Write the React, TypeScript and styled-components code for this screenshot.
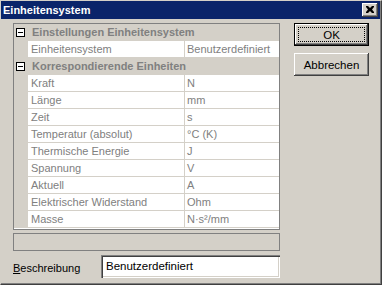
import * as React from "react";
import styled, { createGlobalStyle } from "styled-components";

const GlobalStyle = createGlobalStyle`
  html, body {
    margin: 0;
    padding: 0;
    background: #d4d0c8;
  }
  * {
    box-sizing: border-box;
  }
`;

type Row =
  | { kind: "category"; label: string }
  | { kind: "prop"; label: string; value: string };

const rows: Row[] = [
  { kind: "category", label: "Einstellungen Einheitensystem" },
  { kind: "prop", label: "Einheitensystem", value: "Benutzerdefiniert" },
  { kind: "category", label: "Korrespondierende Einheiten" },
  { kind: "prop", label: "Kraft", value: "N" },
  { kind: "prop", label: "Länge", value: "mm" },
  { kind: "prop", label: "Zeit", value: "s" },
  { kind: "prop", label: "Temperatur (absolut)", value: "°C (K)" },
  { kind: "prop", label: "Thermische Energie", value: "J" },
  { kind: "prop", label: "Spannung", value: "V" },
  { kind: "prop", label: "Aktuell", value: "A" },
  { kind: "prop", label: "Elektrischer Widerstand", value: "Ohm" },
  { kind: "prop", label: "Masse", value: "N·s²/mm" },
];

export default function App() {
  return (
    <>
      <GlobalStyle />
      <Window>
        <TitleBar>
          <span>Einheitensystem</span>
          <CloseButton aria-label="Schließen">
            <svg width="8" height="7" viewBox="0 0 8 7">
              <path
                d="M0 0h2l2 2 2-2h2v1L6 3.5 8 6v1H6L4 5 2 7H0V6l2-2.5L0 1z"
                fill="#000"
              />
            </svg>
          </CloseButton>
        </TitleBar>
        <Body>
          <Main>
            <Grid>
              {rows.map((row, i) =>
                row.kind === "category" ? (
                  <CategoryRow key={i}>
                    <Gutter>
                      <Minus />
                    </Gutter>
                    <CategoryLabel>{row.label}</CategoryLabel>
                  </CategoryRow>
                ) : (
                  <PropRow key={i}>
                    <Gutter />
                    <NameCell>{row.label}</NameCell>
                    <ValueCell>{row.value}</ValueCell>
                  </PropRow>
                )
              )}
            </Grid>
            <StatusBox />
            <DescRow>
              <DescLabel>
                <u>B</u>eschreibung
              </DescLabel>
              <DescInput>Benutzerdefiniert</DescInput>
            </DescRow>
          </Main>
          <Buttons>
            <Button $default>OK</Button>
            <Button>Abbrechen</Button>
          </Buttons>
        </Body>
      </Window>
    </>
  );
}

const Window = styled.div`
  width: 382px;
  height: 285px;
  background: #d4d0c8;
  border-top: 1px solid #d4d0c8;
  border-left: 1px solid #d4d0c8;
  border-right: 1px solid #404040;
  border-bottom: 1px solid #404040;
  box-shadow: inset -1px -1px #808080;
  font-family: "Liberation Sans", Arial, sans-serif;
  font-size: 11px;
  display: flex;
  flex-direction: column;
`;

const TitleBar = styled.div`
  height: 18px;
  margin-right: 1px;
  background: #0a246a;
  color: #fff;
  font-weight: bold;
  font-size: 11px;
  display: flex;
  align-items: center;
  justify-content: space-between;
  padding: 0 2px 0 2px;
`;

const CloseButton = styled.div`
  width: 16px;
  height: 14px;
  background: #d4d0c8;
  display: flex;
  align-items: center;
  justify-content: center;
  box-shadow: inset -1px -1px #404040, inset 1px 1px #fff,
    inset -2px -2px #808080;
  padding-bottom: 1px;
`;

const Body = styled.div`
  display: flex;
  gap: 14px;
  padding: 4px 0 0 12px;
`;

const Main = styled.div`
  width: 267px;
  display: flex;
  flex-direction: column;
`;

const Grid = styled.div`
  border: 1px solid #808080;
  background: #fff;
  padding-bottom: 1px;
  height: 207px;
`;

const RowBase = styled.div`
  display: flex;
  height: 17px;
  border-bottom: 1px solid #d4d0c8;
`;

const CategoryRow = styled(RowBase)`
  background: #d4d0c8;
`;

const PropRow = styled(RowBase)`
  background: #fff;
`;

const Gutter = styled.div`
  width: 14px;
  flex: none;
  background: #d4d0c8;
  padding: 4px 0 0 2px;
`;

const Minus = styled.div`
  width: 9px;
  height: 9px;
  border: 1px solid #000;
  background: #fff;
  position: relative;
  &::after {
    content: "";
    position: absolute;
    left: 1px;
    top: 3px;
    width: 5px;
    height: 1px;
    background: #000;
  }
`;

const CategoryLabel = styled.div`
  padding-left: 4px;
  font-weight: bold;
  color: #808080;
  line-height: 16px;
  white-space: nowrap;
`;

const NameCell = styled.div`
  width: 157px;
  flex: none;
  padding-left: 3px;
  border-right: 1px solid #d4d0c8;
  color: #808080;
  line-height: 16px;
  white-space: nowrap;
`;

const ValueCell = styled.div`
  flex: 1;
  padding-left: 2px;
  color: #808080;
  line-height: 16px;
  white-space: nowrap;
`;

const StatusBox = styled.div`
  margin-top: 3px;
  height: 18px;
  border: 1px solid #808080;
`;

const DescRow = styled.div`
  margin-top: 4px;
  display: flex;
  align-items: center;
  justify-content: space-between;
`;

const DescLabel = styled.div`
  color: #000;
  padding-top: 2px;
`;

const DescInput = styled.div`
  width: 179px;
  height: 23px;
  background: #fff;
  color: #000;
  font-size: 11.5px;
  padding: 5px 0 0 5px;
  box-shadow: inset 1px 1px #808080, inset 2px 2px #404040,
    inset -1px -1px #fff, inset -2px -2px #d4d0c8;
`;

const Buttons = styled.div`
  display: flex;
  flex-direction: column;
  gap: 7px;
`;

const Button = styled.div<{ $default?: boolean }>`
  position: relative;
  width: 75px;
  height: 23px;
  display: flex;
  align-items: center;
  justify-content: center;
  color: #000;
  font-size: 11.5px;
  background: #d4d0c8;
  border: ${(p) => (p.$default ? "1px solid #000" : "none")};
  box-shadow: inset -1px -1px #404040, inset 1px 1px #fff,
    inset -2px -2px #808080;
  &::after {
    content: "";
    display: ${(p) => (p.$default ? "block" : "none")};
    position: absolute;
    inset: 3px;
    border: 1px dotted #000;
  }
`;
